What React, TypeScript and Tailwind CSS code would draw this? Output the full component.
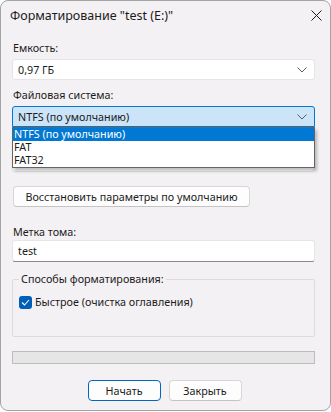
import React from "react";

const Chevron = () => (
  <svg width="10" height="6" viewBox="0 0 10 6" className="shrink-0">
    <path d="M0.5 0.5 L5 5 L9.5 0.5" fill="none" stroke="#5c5c5c" strokeWidth="1" />
  </svg>
);

export default function App() {
  return (
    <div className="w-[331px] h-[412px] bg-white" style={{ fontFamily: '"Noto Sans", "Segoe UI", sans-serif' }}>
      <div className="w-[331px] h-[411px] border border-[#a3a3a3] rounded-lg bg-[#f4f1f4] text-[10.75px] leading-[16px] text-[#1b1b1b] flex flex-col">
        {/* title bar */}
        <div className="h-[29px] flex items-center justify-between pl-[9px] pr-[8px]">
          <span className="text-[12.5px]">Форматирование "test (E:)"</span>
          <svg width="11" height="11" viewBox="0 0 11 11">
            <path d="M0.5 0.5 L10.5 10.5 M10.5 0.5 L0.5 10.5" stroke="#1b1b1b" strokeWidth="1" />
          </svg>
        </div>
        <div className="px-[11px] flex flex-col">
          <div className="mt-[10px] h-[16px] pl-[1px]">Емкость:</div>
          <div className="mt-[3px] h-[21px] w-[303px] bg-white border border-[#e5e5e5] rounded-[3px] flex items-center justify-between pl-[5px] pr-[7px]">
            <span>0,97 ГБ</span>
            <Chevron />
          </div>
          <div className="mt-[7px] h-[16px] pl-[1px]">Файловая система:</div>
          <div className="relative mt-[3px] w-[303px]">
            <div className="h-[21px] bg-[#cce4f7] border border-[#0078d4] rounded-t-[3px] flex items-center justify-between pl-[5px] pr-[7px]">
              <span>NTFS (по умолчанию)</span>
              <Chevron />
            </div>
            {/* hidden cluster size select under the list */}
            <div className="mt-[24px] h-[21px] bg-white border border-[#e5e5e5] rounded-[3px]" />
            {/* dropdown list */}
            <div className="absolute left-0 top-[21px] w-[303px] bg-white border border-[#646464] shadow-[2px_3px_3px_rgba(0,0,0,0.25)]">
              <div className="h-[13px] bg-[#0078d4] text-white flex items-center pl-[1px] leading-[13px]">NTFS (по умолчанию)</div>
              <div className="h-[13px] flex items-center pl-[1px] leading-[13px]">FAT</div>
              <div className="h-[13px] flex items-center pl-[1px] leading-[13px]">FAT32</div>
            </div>
          </div>
          <div className="mt-[14px] h-[21px] w-[237px] ml-[1px] bg-[#fdfdfd] border border-[#d6d6d6] border-b-[#c4c4c4] rounded-[4px] flex items-center justify-center whitespace-nowrap">
            Восстановить параметры по умолчанию
          </div>
          <div className="mt-[17px] h-[16px] pl-[1px]">Метка тома:</div>
          <div className="h-[22px] w-[303px] bg-white border border-[#e5e5e5] border-b-[#8a8a8a] rounded-[3px] flex items-center pl-[5px]">
            test
          </div>
          {/* group box */}
          <div className="relative mt-[17px] h-[58px] w-[303px] border border-[#dcdcdc] rounded-[2px]">
            <span className="absolute -top-[9px] left-[6px] bg-[#f4f1f4] px-[2px]">Способы форматирования:</span>
            <div className="mt-[14px] ml-[6px] flex items-center gap-[3px]">
              <span className="w-[13px] h-[13px] rounded-[3px] bg-[#005fb8] flex items-center justify-center">
                <svg width="9" height="7" viewBox="0 0 9 7">
                  <path d="M1 3.5 L3.5 6 L8 1" fill="none" stroke="white" strokeWidth="1.1" />
                </svg>
              </span>
              <span>Быстрое (очистка оглавления)</span>
            </div>
          </div>
          <div className="mt-[14px] h-[13px] w-[303px] bg-[#e6e6e6] border border-[#bcbcbc]" />
          <div className="mt-[16px] flex justify-center gap-[8px] pr-[2px]">
            <div className="w-[73px] h-[21px] bg-[#fdfdfd] border border-[#0067c0] rounded-[4px] flex items-center justify-center">Начать</div>
            <div className="w-[73px] h-[21px] bg-[#fdfdfd] border border-[#d6d6d6] border-b-[#c4c4c4] rounded-[4px] flex items-center justify-center">Закрыть</div>
          </div>
        </div>
      </div>
    </div>
  );
}
